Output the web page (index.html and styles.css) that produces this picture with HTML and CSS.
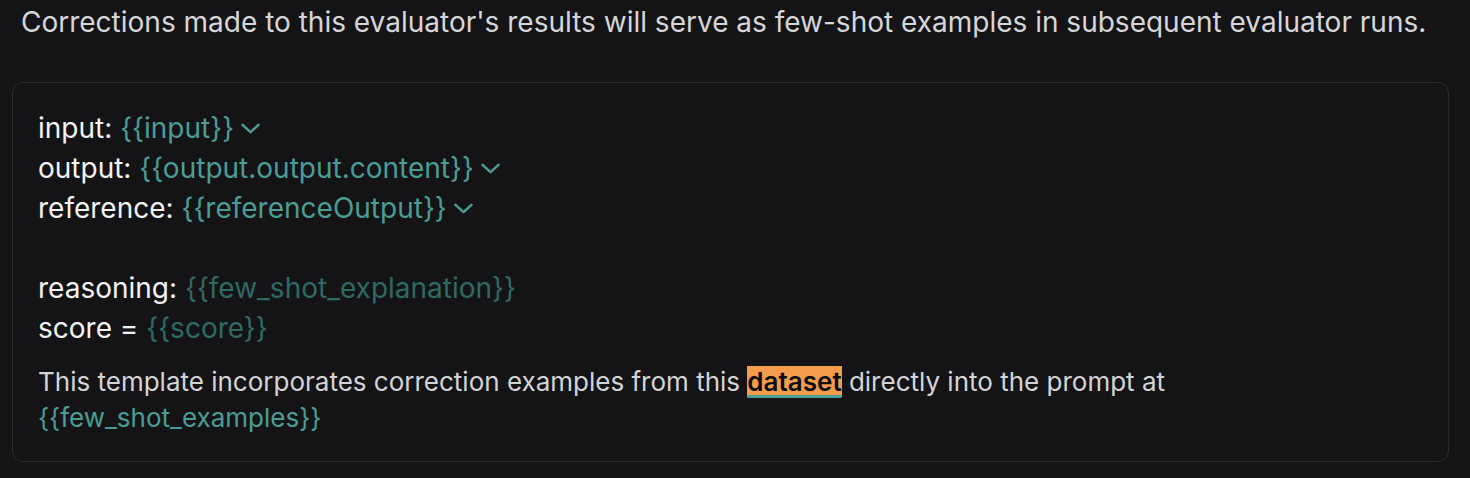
FILE: index.html
```html
<!DOCTYPE html>
<html>
<head>
<meta charset="utf-8">
<link rel="stylesheet" href="styles.css">
</head>
<body>
<div class="page">
  <p class="intro">Corrections made to this evaluator's results will serve as few-shot examples in subsequent evaluator runs.</p>
  <div class="card">
    <div class="editor">
      <div class="line">input: <span class="var">{{input}}</span><svg class="chev" viewBox="0 0 19 11"><path d="M1.5 1.8 L9.5 9.2 L17.5 1.8"/></svg></div>
      <div class="line">output: <span class="var">{{output.output.content}}</span><svg class="chev" viewBox="0 0 19 11"><path d="M1.5 1.8 L9.5 9.2 L17.5 1.8"/></svg></div>
      <div class="line">reference: <span class="var">{{referenceOutput}}</span><svg class="chev" viewBox="0 0 19 11"><path d="M1.5 1.8 L9.5 9.2 L17.5 1.8"/></svg></div>
      <div class="line blank"></div>
      <div class="line">reasoning: <span class="var dim">{{few_shot_explanation}}</span></div>
      <div class="line">score = <span class="var dim">{{score}}</span></div>
    </div>
    <p class="note">This template incorporates correction examples from this <span class="hl">dataset</span> directly into the prompt at <br><span class="var">{{few_shot_examples}}</span></p>
  </div>
</div>
</body>
</html>
```
FILE: styles.css
```css
html, body {
  margin: 0;
  padding: 0;
  background: #141416;
}
body {
  font-family: Inter, "Noto Sans", sans-serif;
  color: #f2f2f3;
}
.page {
  padding: 0 22px 0 12px;
}
.intro {
  margin: 0;
  padding: 5px 0 0 9px;
  font-size: 28px;
  line-height: 34px;
  color: #d6d6da;
  height: 82px;
  box-sizing: border-box;
}
.card {
  border: 1.5px solid #2b2b2f;
  border-radius: 11px;
  padding: 25px 26px 25px 25px;
  width: 1384px;
}
.editor {
  font-size: 28px;
  line-height: 40px;
  color: #f2f2f3;
}
.line {
  height: 40px;
  display: flex;
  align-items: center;
  white-space: pre;
}
.var {
  color: #4c9c96;
}
.var.dim {
  color: #2f6964;
}
.chev {
  width: 19px;
  height: 11px;
  margin-left: 7px;
  margin-top: 0;
  fill: none;
  stroke: #4c9c96;
  stroke-width: 2.5;
  stroke-linecap: round;
  stroke-linejoin: round;
}
.note {
  margin: 16px 0 0;
  font-size: 26px;
  line-height: 36px;
  color: #d3d3d6;
}
.hl {
  background: #f39c4c;
  color: #0c0c0c;
  font-weight: 600;
  text-decoration: underline;
  text-decoration-color: #4c9c96;
  text-decoration-thickness: 2.5px;
  text-underline-offset: 4px;
}
```
